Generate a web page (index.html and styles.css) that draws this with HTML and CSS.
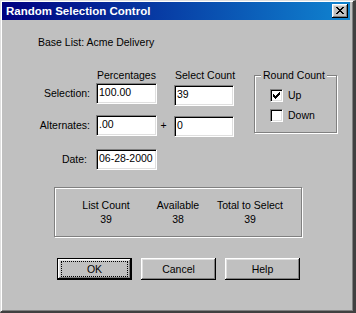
FILE: index.html
```html
<!DOCTYPE html>
<html>
<head>
<meta charset="utf-8">
<link rel="stylesheet" href="styles.css">
</head>
<body>
<div class="window">
  <div class="titlebar">
    <span class="title">Random Selection Control</span>
    <div class="close">
      <svg width="8" height="7" viewBox="0 0 8 7" shape-rendering="crispEdges"><path fill="#000" d="M0 0h2v1H0z M6 0h2v1H6z M1 1h2v1H1z M5 1h2v1H5z M2 2h4v1H2z M3 3h2v1H3z M2 4h4v1H2z M1 5h2v1H1z M5 5h2v1H5z M0 6h2v1H0z M6 6h2v1H6z"/></svg>
    </div>
  </div>
  <div class="client">
    <div class="base">Base List: Acme Delivery</div>
    <div class="form">
      <div class="grid">
        <div></div>
        <div class="head">Percentages</div>
        <div></div>
        <div class="head">Select Count</div>
        <div class="label">Selection:</div>
        <div class="field">100.00</div>
        <div></div>
        <div class="field down2">39</div>
        <div class="label">Alternates:</div>
        <div class="field">.00</div>
        <div class="plus">+</div>
        <div class="field down1">0</div>
        <div class="label date">Date:</div>
        <div class="field">06-28-2000</div>
      </div>
      <fieldset class="group">
        <legend>Round Count</legend>
        <div class="check">
          <span class="box"><svg width="7" height="7" viewBox="0 0 7 7" shape-rendering="crispEdges"><path fill="#000" d="M6 0h1v1H6z M5 1h2v1H5z M0 2h1v1H0z M4 2h3v1H4z M0 3h2v1H0z M3 3h3v1H3z M0 4h5v1H0z M1 5h3v1H1z M2 6h1v1H2z"/></svg></span>
          <span>Up</span>
        </div>
        <div class="check">
          <span class="box"></span>
          <span>Down</span>
        </div>
      </fieldset>
    </div>
    <div class="summary">
      <div class="col"><div>List Count</div><div>39</div></div>
      <div class="col"><div>Available</div><div>38</div></div>
      <div class="col"><div>Total to Select</div><div>39</div></div>
    </div>
    <div class="buttons">
      <div class="btn default"><span class="focus">OK</span></div>
      <div class="btn">Cancel</div>
      <div class="btn">Help</div>
    </div>
  </div>
</div>
</body>
</html>
```
FILE: styles.css
```css
body {
  margin: 0;
  font-family: "Liberation Sans", Arial, sans-serif;
  font-size: 10.5px;
  line-height: 13px;
  color: #000;
  background: #c0c0c0;
}

.window {
  box-sizing: border-box;
  width: 356px;
  height: 313px;
  background: #c0c0c0;
  border-style: solid;
  border-width: 1px 3px 2px 1px;
  border-color: #dfdfdf #404040 #404040 #dfdfdf;
  box-shadow: inset 1px 1px #fff, inset -1px -1px #808080;
  padding: 1px 3px 0 1px;
}

.titlebar {
  height: 18px;
  display: flex;
  align-items: center;
  background: linear-gradient(to right, #000080, #1084d0);
  padding: 0 2px 0 4px;
}

.title {
  flex: 1;
  color: #fff;
  font-weight: bold;
  font-size: 11.5px;
  line-height: 18px;
  white-space: nowrap;
}

.close {
  width: 16px;
  height: 14px;
  box-sizing: border-box;
  background: #c0c0c0;
  box-shadow: inset -1px -1px #000, inset 1px 1px #fff, inset -2px -2px #808080, inset 2px 2px #dfdfdf;
  display: flex;
  align-items: center;
  justify-content: center;
}

.close svg {
  display: block;
  margin: 0 1px 1px 0;
}

.base {
  margin: 16px 0 0 36px;
}

.form {
  display: flex;
  align-items: flex-start;
  margin-top: 20px;
}

.grid {
  display: grid;
  grid-template-columns: 94px 61px 17px 60px;
  grid-template-rows: 14px 32px 34px 21px;
  align-items: start;
}

.head {
  padding-left: 1px;
  white-space: nowrap;
}

.label {
  text-align: right;
  padding-right: 6px;
  line-height: 20px;
  white-space: nowrap;
}

.label.date {
  padding-right: 9px;
}

.plus {
  line-height: 21px;
  text-align: center;
  padding-right: 4px;
}

.field {
  height: 21px;
  box-sizing: border-box;
  background: #fff;
  border: 1px solid;
  border-color: #808080 #fff #fff #808080;
  box-shadow: inset 1px 1px #000, inset -1px -1px #dfdfdf;
  padding: 1px 2px 0 2px;
  line-height: 15px;
  white-space: nowrap;
  overflow: hidden;
}

.field.down2 {
  margin-top: 2px;
}

.field.down1 {
  margin-top: 1px;
}

.group {
  margin: 0 0 0 20px;
  width: 83px;
  min-width: 0;
  box-sizing: border-box;
  padding: 7px 6px 10px 6px;
  border: 1px solid #808080;
  box-shadow: 1px 1px 0 #fff, inset 1px 1px 0 #fff;
}

.group legend {
  padding: 0 2px;
  background: #c0c0c0;
  line-height: 13px;
  white-space: nowrap;
}

.check {
  display: flex;
  align-items: center;
  height: 13px;
  margin-left: 9px;
}

.check + .check {
  margin-top: 7px;
}

.box {
  width: 13px;
  height: 13px;
  box-sizing: border-box;
  background: #fff;
  border: 1px solid;
  border-color: #808080 #fff #fff #808080;
  box-shadow: inset 1px 1px #000, inset -1px -1px #dfdfdf;
  margin-right: 5px;
  display: flex;
  align-items: center;
  justify-content: center;
}

.box svg {
  display: block;
}

.summary {
  display: flex;
  width: 248px;
  box-sizing: border-box;
  margin: 17px 0 0 52px;
  padding: 10px 15px;
  border: 1px solid #808080;
  box-shadow: 1px 1px 0 #fff, inset 1px 1px 0 #fff;
  line-height: 14px;
}

.col {
  width: 72px;
  text-align: center;
  white-space: nowrap;
}

.buttons {
  display: flex;
  gap: 9px;
  margin: 21px 0 0 55px;
}

.btn {
  width: 75px;
  height: 22px;
  box-sizing: border-box;
  display: flex;
  align-items: center;
  justify-content: center;
  background: #c0c0c0;
  box-shadow: inset -1px -1px #000, inset 1px 1px #fff, inset -2px -2px #808080, inset 2px 2px #dfdfdf;
}

.btn.default {
  border: 1px solid #000;
  align-items: stretch;
}

.focus {
  flex: 1;
  margin: 2px 3px;
  border: 1px dotted #000;
  display: flex;
  align-items: center;
  justify-content: center;
}
```
